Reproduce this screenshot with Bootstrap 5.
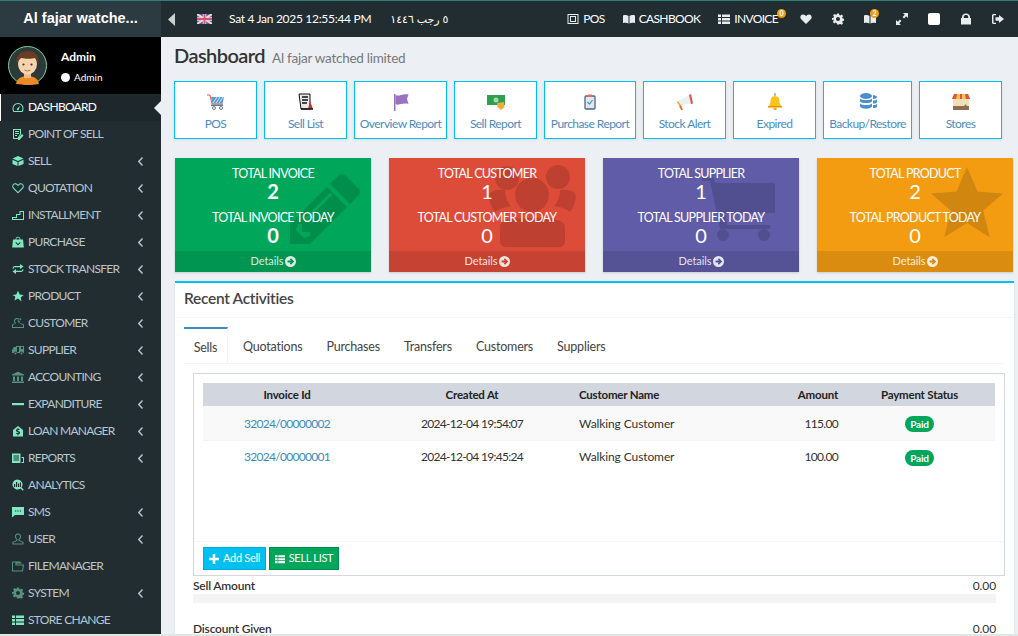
<!DOCTYPE html>
<html lang="en">
<head>
<meta charset="UTF-8">
<title>Dashboard</title>
<link href="https://cdn.jsdelivr.net/npm/bootstrap@5.3.0/dist/css/bootstrap.min.css" rel="stylesheet">
<style>
html, body { height: 636px; overflow: hidden; }
body { font-family: "Lato", "DejaVu Sans", sans-serif; font-size: 13px; background: #ecf0f5; color: #333; border-top: 1px solid #2f7d7d; border-bottom: 2px solid #dfe8e4; }
.shell { height: 633px; }
.side-col { width: 161px; background: #222d32; flex: none; }
.brand-box { height: 36px; background: #2c3b41; color: #fff; font-family: "Liberation Sans", sans-serif; font-weight: 700; font-size: 14.5px; }
.user-box { height: 57px; background: #000; color: #fff; padding: 9px 0 0 8px; }
.user-info { margin-left: 14px; }
.user-name { font-size: 12px; font-weight: 700; line-height: 15px; margin-top: 3px; }
.user-role { font-size: 10px; line-height: 12px; margin-top: 7px; }
.dot-on { width: 9px; height: 9px; border-radius: 50%; background: #fff; }
.side-item { height: 27px; padding: 0 18px 1px 12px; color: #b8c7ce; text-decoration: none; font-size: 12px; letter-spacing: -.7px; position: relative; white-space: nowrap; }
.side-item.on { background: #1e282c; color: #fff; border-left: 1px solid #fff; padding-left: 11px; }
.side-item.on::after { content: ""; position: absolute; right: 0; top: 7px; border: 7px solid transparent; border-right-color: #ecf0f5; border-left: 0; }
.side-ico { width: 12px; height: 12px; margin-right: 4px; flex: none; fill: #7fe8c0; fill-rule: evenodd; }
.side-ico.dim { opacity: .55; }
.chev { width: 5px; height: 9px; margin-left: auto; stroke: #b8c7ce; stroke-width: 1.4; fill: none; }
.top-bar { height: 36px; background: #222d32; color: #fff; font-size: 12px; flex: none; white-space: nowrap; padding-right: 14px; }
.back-arrow { margin: 0 22px 0 7px; }
.top-date { margin-left: 17px; letter-spacing: -.3px; }
.top-hijri { margin-left: 19px; font-size: 11px; }
.top-link { letter-spacing: -.65px; position: relative; margin-left: 18px; }
.top-ico { width: 12px; height: 12px; fill: #e8ecec; flex: none; fill-rule: evenodd; }
.top-solo { margin-left: 20px; position: relative; }
.top-first { margin-left: 22px; }
.top-badge { position: absolute; background: #f39c12; color: #fff; border-radius: 50%; width: 9px; height: 9px; font-size: 7px; line-height: 9px; text-align: center; font-weight: 700; letter-spacing: 0; font-style: normal; }
.badge-inv { right: -8px; top: -1px; }
.badge-book { right: -3px; top: -4px; }
.head-row { padding: 6px 0 0 13px; height: 44px; }
.page-title { font-size: 20px; font-weight: 600; color: #333; letter-spacing: -.55px; line-height: 24px; }
.page-sub { font-size: 13.5px; color: #777; letter-spacing: -.25px; margin-left: -1px; }
.tile-row { margin-left: 13px; gap: 7px; }
.tile { height: 58px; background: #fff; border: 1px solid #00c0ef; color: #4d8cbf; font-size: 12px; letter-spacing: -.55px; flex: none; box-shadow: 0 1px 3px rgba(0,0,0,.08); white-space: nowrap; padding-top: 4px; }
.tile svg { width: 20px; height: 20px; display: block; margin-bottom: 3px; }
.w83 { width: 83px; } .w89 { width: 89px; } .w92 { width: 92px; } .w93 { width: 93px; }
.stat-row { margin: 19px 0 0 14px; gap: 18px; }
.stat { width: 196px; height: 114px; color: #fff; position: relative; overflow: hidden; flex: none; box-shadow: 0 1px 2px rgba(0,0,0,.15); }
.stat-body { height: 93px; padding-top: 8px; text-align: center; position: relative; font-size: 12.5px; letter-spacing: -.72px; line-height: 16px; }
.stat-num { font-size: 20px; line-height: 21px; margin: -1px 0 8px; letter-spacing: 0; }
.stat-foot { height: 21px; background: rgba(0,0,0,.1); font-size: 11px; letter-spacing: -.1px; color: rgba(255,255,255,.85); position: relative; padding-left: 1px; }
.stat-foot svg { width: 11px; height: 11px; margin-left: 2px; fill: #fff; fill-rule: evenodd; opacity: .85; }
.stat-bg { position: absolute; fill: rgba(0,0,0,.14); fill-rule: evenodd; }
.bg-pencil { width: 72px; height: 72px; left: 115px; top: 14px; }
.bg-users { width: 90px; height: 90px; left: 100px; top: 5px; }
.bg-cart { width: 85px; height: 80px; left: 95px; top: 10px; }
.bg-star { width: 76px; height: 74px; left: 112px; top: 8px; }
.c-green { background: #00a65a; } .c-red { background: #dd4b39; } .c-purple { background: #605ca8; } .c-orange { background: #f39c12; }
.panel-box { width: 839px; background: #fff; border-top: 2px solid #00c0ef; margin-left: 14px; margin-top: 9px; flex: 1; overflow: hidden; box-shadow: 0 1px 2px rgba(0,0,0,.12); }
.panel-head { height: 35px; border-bottom: 1px solid #f4f4f4; padding: 0 0 2px 9px; font-size: 15.5px; font-weight: 600; letter-spacing: -.3px; color: #444; }
.tab-row { margin: 9px 9px 0; height: 37px; border-bottom: 1px solid #f4f4f4; }
.tab-lnk { padding: 4px 15px 0 0; margin-right: 9px; color: #444; font-size: 12.5px; letter-spacing: -.2px; }
.tab-lnk.on { width: 44px; margin-right: 15px; padding: 4px 0 0; justify-content: center; border-top: 2px solid #3c8dbc; border-right: 1px solid #f4f4f4; height: 37px; }
.inner-box { margin: 9px 9px 0 18px; width: 812px; height: 203px; border: 1px solid #d2d6de; padding: 9px; position: relative; }
.sell-tbl { width: 792px; table-layout: fixed; border-collapse: collapse; font-size: 12px; letter-spacing: -.1px; }
.sell-tbl th { background: #d2d6de; height: 23px; padding: 0 6px; font-size: 11.5px; font-weight: 700; color: #222; letter-spacing: -.2px; }
.sell-tbl th:nth-child(1) { width: 168px; } .sell-tbl th:nth-child(2) { width: 202px; } .sell-tbl th:nth-child(3) { width: 187px; } .sell-tbl th:nth-child(4) { width: 84px; } .sell-tbl th:nth-child(5) { width: 151px; }
.sell-tbl td { padding: 2px 6px 0; color: #333; }
.sell-tbl td.digits { letter-spacing: -.7px; }
.sell-tbl .r1 td { background: #f9f9f9; height: 34px; border-bottom: 1px solid #f4f4f4; }
.sell-tbl .r2 td { height: 33px; }
.sell-tbl .r2 td:not(:last-child) { padding-top: 0; }
.sell-tbl a { color: #3c8dbc; text-decoration: none; }
.paid { background: #00a65a; color: #fff; border-radius: 8px; font-size: 10px; font-weight: 700; padding: 0 5px; line-height: 16px; display: inline-block; letter-spacing: -.2px; }
.box-foot { position: absolute; left: 0; right: 0; bottom: 0; height: 34px; border-top: 1px solid #f4f4f4; padding: 5px 0 0 9px; }
.act { height: 23px; width: 63px; color: #fff; font-size: 11px; border: 1px solid #00acd6; background: #00c0ef; letter-spacing: -.3px; white-space: nowrap; gap: 4px; }
.act.g { width: 70px; background: #00a65a; border-color: #008d4c; margin-left: 3px; }
.act svg { width: 10px; height: 10px; fill: #fff; flex: none; }
.amt-row { margin: 3px 0 0 18px; width: 803px; font-size: 12px; letter-spacing: -.1px; line-height: 13px; }
.amt-row b { font-weight: 600; color: #333; letter-spacing: -.2px; }
.amt-bar { margin: 2px 0 19px 18px; width: 803px; height: 9px; background: #f4f4f4; }
</style>
</head>
<body>
<svg width="0" height="0" class="d-none">
  <symbol id="dash" viewBox="0 0 12 12"><path d="M6 2a5.500 5.500 0 0 0-5.500 5.500c0 1.500.5 2.500 1 3.500h9c.5-1 1-2 1-3.500A5.500 5.500 0 0 0 6 2zm0 1a4.500 4.500 0 0 1 4.500 4.500c0 1-.3 1.800-.6 2.500H2.100c-.3-.7-.6-1.500-.6-2.500A4.500 4.500 0 0 1 6 3zm2.200 1.800L5.500 7.200a1 1 0 1 0 1.300 1.100z"/></symbol>
  <symbol id="form" viewBox="0 0 12 12"><path d="M1 1h8v5L6 11H1zm1 1v8h3.500L8 6V2zm1 1h4v1H3zm0 2h4v1H3zm0 2h2v1H3zm7-1 1.500 1.500L7.500 12H6v-1.500z"/></symbol>
  <symbol id="box" viewBox="0 0 12 12"><path d="M6 1 11.500 3.500 6 6 .5 3.500zM.5 4.800 5.500 7v4L.5 9zM6.500 7l5-2.200V9l-5 2z"/></symbol>
  <symbol id="heart" viewBox="0 0 12 12"><path d="M6 11 1 6C-.5 4 .8 1.500 3 1.500c1.300 0 2.400.8 3 1.800.6-1 1.700-1.800 3-1.800 2.200 0 3.500 2.500 2 4.500z"/></symbol>
  <symbol id="heart-o" viewBox="0 0 12 12"><path d="M6 11.500.8 6.200C-.7 4 .8 1.200 3.200 1.200 4.400 1.200 5.400 1.800 6 2.800c.6-1 1.600-1.600 2.800-1.600 2.400 0 3.900 2.800 2.400 5zM6 10l4.400-4.500c1-1.500 0-3.300-1.600-3.300-1.200 0-2.200 1-2.800 2.200-.6-1.200-1.600-2.200-2.800-2.200-1.600 0-2.600 1.800-1.600 3.300z"/></symbol>
  <symbol id="steps" viewBox="0 0 12 12"><path d="M0 11V8h4V5h3.500V2H12v9zm1-1h10V3H8.500v3H5v3H1z"/></symbol>
  <symbol id="bag" viewBox="0 0 12 12"><path d="M1 3.500h2.500C3.500 2 4.500.8 6 .8s2.500 1.200 2.500 2.700H11l.8 8H.2zm3.300 0h3.400C7.700 2.500 7 1.600 6 1.600s-1.700.9-1.700 1.900zM4 6l2 2 2-2 .7.7L6 9.500 3.300 6.700z"/></symbol>
  <symbol id="swap" viewBox="0 0 12 12"><path d="M8 1l3.500 2.500L8 6V4.300H3c-1 0-1.500.7-1.500 1.500H.5C.5 4.300 1.500 3 3 3h5zM4 11 .5 8.500 4 6v1.700h5c1 0 1.500-.7 1.500-1.500h1c0 1.500-1 2.800-2.500 2.800H4z"/></symbol>
  <symbol id="star" viewBox="0 0 12 12"><path d="m6 .8 1.700 3.600 3.900.5-2.900 2.700.8 3.900L6 8.600l-3.500 1.900.8-3.900L.4 4.900l3.900-.5z"/></symbol>
  <symbol id="cust" viewBox="0 0 12 12"><path d="M5 1a3 3 0 0 1 3 3 3 3 0 0 1-1 2.300l-.6-.7A2 2 0 0 0 7 4a2 2 0 0 0-4 0c0 .7.300 1.300.8 1.700l.2.600L1 8v2h10V8L8 6.800l.4-.8L12 7.500V11H0V7.500l2.900-1.300A3 3 0 0 1 2 4a3 3 0 0 1 3-3zM8.500 1l1 1-3 3-1-1z"/></symbol>
  <symbol id="truck" viewBox="0 0 12 12"><path d="M4 2h8v7h-1a1.500 1.500 0 0 0-3 0H5a1.500 1.500 0 0 0-3 0H0V6l2-3h2zm1 1v5h2V3zm4 0v2h2V3zM3.500 8.500a1 1 0 1 1 0 2 1 1 0 0 1 0-2zm6 0a1 1 0 1 1 0 2 1 1 0 0 1 0-2z"/></symbol>
  <symbol id="bank" viewBox="0 0 12 12"><path d="M6 .8 12 3.600v1H0v-1zM1 5.500h2V10H1zm4 0h2V10H5zm4 0h2V10H9zM0 10.500h12V12H0z"/></symbol>
  <symbol id="minus" viewBox="0 0 12 12"><path d="M0 5h12v2.200H0z"/></symbol>
  <symbol id="loan" viewBox="0 0 12 12"><path d="M6 1l5 4v6.500H1V5zM5.500 3v1C4.500 4.200 4 4.800 4 5.500c0 1 .9 1.400 1.800 1.700.6.200.8.300.8.600s-.3.500-.8.500c-.4 0-.9-.2-1.300-.5l-.5 1c.4.300 1 .5 1.500.5v1h1v-1c1-.2 1.500-.9 1.500-1.600 0-1-.7-1.400-1.800-1.800-.6-.2-.8-.3-.8-.6 0-.2.200-.4.700-.4.400 0 .8.100 1.100.3l.4-1c-.3-.2-.7-.3-1.100-.3V3z"/></symbol>
  <symbol id="report" viewBox="0 0 12 12"><path d="M0 1.500h8.500V11H0zm1.500 2v1h5.500v-1zm0 2v1h5.500v-1zm0 2v1h5.500v-1zM9.500 5H12v6H9.500v-1h1.500V6H9.500z"/></symbol>
  <symbol id="chart" viewBox="0 0 12 12"><path d="M5.500 .5a5 5 0 0 1 4 8l2.300 2.300-1 1-2.300-2.300a5 5 0 1 1-3-9zM2 5h1.200v3H2zm2-2h1.200v5H4zm2 1.500h1.200V8H6zm2-1h1v4.500H8z"/></symbol>
  <symbol id="sms" viewBox="0 0 12 12"><path d="M0 1h12v8H3l-3 2.500zm3 3.400v1.200h1.200V4.400zm2.400 0v1.200h1.200V4.400zm2.400 0v1.200H9V4.400z"/></symbol>
  <symbol id="user-o" viewBox="0 0 12 12"><path d="M6 .5a3 3 0 0 1 3 3c0 1.300-.6 2.400-1.500 3v.7L11.500 9v2.500H.5V9l4-1.800v-.7A3.500 3.500 0 0 1 3 3.500a3 3 0 0 1 3-3zm0 1a2 2 0 0 0-2 2c0 1.200.7 2.200 1.500 2.500v1.800l-4 1.800v1h9v-1l-4-1.800V6C7.300 5.700 8 4.700 8 3.500a2 2 0 0 0-2-2z"/></symbol>
  <symbol id="folder" viewBox="0 0 12 12"><path d="M1 1.500h7l2 2H4.500v1H12l-1 7H0V2zm0 1v8h9.200l.6-5H3.500V2.500z"/></symbol>
  <symbol id="gear" viewBox="0 0 12 12"><path d="M5 .5h2l.3 1.600 1 .4L9.700 1.600l1.400 1.400-.9 1.400.4 1 1.600.3v2l-1.600.3-.4 1 .9 1.400-1.400 1.400-1.400-.9-1 .4L7 11.500H5l-.3-1.600-1-.4-1.400.9-1.400-1.400.9-1.400-.4-1L0 7V5l1.600-.3.4-1-.9-1.400L2.500.9l1.400.9 1-.4zM6 4a2 2 0 1 0 0 4 2 2 0 0 0 0-4z"/></symbol>
  <symbol id="lines" viewBox="0 0 12 12"><path d="M0 1.500h3v2.500H0zm4 0h8v2.500H4zM0 5h3v2.500H0zm4 0h8v2.500H4zM0 8.500h3V11H0zm4 0h8V11H4z"/></symbol>
  <symbol id="book" viewBox="0 0 12 12"><path d="M0 2.500c2-.7 4-.7 5.500.5v7.500C4 9.500 2 9.500 0 10zm12 0v7.500c-2-.5-4-.5-5.500.5V3C8 1.800 10 1.800 12 2.500z"/></symbol>
  <symbol id="screen" viewBox="0 0 12 12"><path d="M.5 1h11v10H.5zm1 1v8h9V2zM3 3h6v6H3zm1 1v4h4V4z"/></symbol>
  <symbol id="expand" viewBox="0 0 12 12"><path d="M7 0h5v5l-1.800-1.800-2.200 2.200L6.600 4l2.200-2.200zM0 12V7l1.800 1.800L4 6.600 5.400 8 3.200 10.200 5 12z"/></symbol>
  <symbol id="lock" viewBox="0 0 12 12"><path d="M2 5V3.700C2 1.800 3.800.5 6 .5s4 1.300 4 3.200V5h1v6.500H1V5zm1.800 0h4.400V3.700C8.200 2.700 7.200 2 6 2s-2.200.7-2.200 1.700z"/></symbol>
  <symbol id="signout" viewBox="0 0 12 12"><path d="M0 2.500C0 1.700.7 1 1.500 1H4v1.300H1.500v7.400H4V11H1.500C.7 11 0 10.300 0 9.500zM7 2l5 4-5 4V7.800H3.500V4.200H7z"/></symbol>
  <symbol id="circ" viewBox="0 0 12 12"><path d="M6 0a6 6 0 1 1 0 12A6 6 0 0 1 6 0zm.5 2.500L5.200 3.800 6.500 5H2.800v2h3.700L5.200 8.200l1.300 1.300L10 6z"/></symbol>
  <symbol id="plus" viewBox="0 0 12 12"><path d="M4.500 0h3v4.500H12v3H7.500V12h-3V7.500H0v-3h4.500z"/></symbol>
</svg>

<div class="shell d-flex">
  <div class="side-col d-flex flex-column">
    <div class="brand-box d-flex align-items-center justify-content-center">Al fajar watche...</div>
    <div class="user-box d-flex">
      <svg width="39" height="39" viewBox="0 0 39 39">
        <circle cx="19.500" cy="19.500" r="19" fill="#2d3a3a" stroke="#7fcfa8"/>
        <path d="M8 38c1-6 6-8 11.500-8S30 32 31 38c-3 1-15 1-23 0z" fill="#f08a24"/>
        <rect x="16" y="25" width="7" height="7" fill="#e9b990"/>
        <ellipse cx="19.500" cy="18" rx="9.500" ry="10.500" fill="#f6d3ad"/>
        <path d="M9 18C7 9 13 5 19.500 5S32 9 30 18c-1-3-2-5-3-6-3 1-10 1-14 0-1 1-3 3-4 6z" fill="#6a3d22"/>
        <circle cx="15.500" cy="18.500" r="1.100" fill="#333"/><circle cx="23.500" cy="18.500" r="1.100" fill="#333"/>
        <path d="M16.500 24c2 1.200 4 1.200 6 0" stroke="#b5714a" fill="none"/>
      </svg>
      <div class="user-info">
        <div class="user-name">Admin</div>
        <div class="user-role d-flex align-items-center gap-1"><span class="dot-on"></span>Admin</div>
      </div>
    </div>
    <a href="#" class="side-item on d-flex align-items-center"><svg class="side-ico"><use href="#dash"/></svg>DASHBOARD</a>
    <a href="#" class="side-item d-flex align-items-center"><svg class="side-ico"><use href="#form"/></svg>POINT OF SELL</a>
    <a href="#" class="side-item d-flex align-items-center"><svg class="side-ico"><use href="#box"/></svg>SELL<svg class="chev" viewBox="0 0 5 9"><path d="M4.500 .5.800 4.500l3.700 4"/></svg></a>
    <a href="#" class="side-item d-flex align-items-center"><svg class="side-ico"><use href="#heart-o"/></svg>QUOTATION<svg class="chev" viewBox="0 0 5 9"><path d="M4.500 .5.800 4.500l3.700 4"/></svg></a>
    <a href="#" class="side-item d-flex align-items-center"><svg class="side-ico"><use href="#steps"/></svg>INSTALLMENT<svg class="chev" viewBox="0 0 5 9"><path d="M4.500 .5.800 4.500l3.700 4"/></svg></a>
    <a href="#" class="side-item d-flex align-items-center"><svg class="side-ico"><use href="#bag"/></svg>PURCHASE<svg class="chev" viewBox="0 0 5 9"><path d="M4.500 .5.800 4.500l3.700 4"/></svg></a>
    <a href="#" class="side-item d-flex align-items-center"><svg class="side-ico"><use href="#swap"/></svg>STOCK TRANSFER<svg class="chev" viewBox="0 0 5 9"><path d="M4.500 .5.800 4.500l3.700 4"/></svg></a>
    <a href="#" class="side-item d-flex align-items-center"><svg class="side-ico"><use href="#star"/></svg>PRODUCT<svg class="chev" viewBox="0 0 5 9"><path d="M4.500 .5.800 4.500l3.700 4"/></svg></a>
    <a href="#" class="side-item d-flex align-items-center"><svg class="side-ico dim"><use href="#cust"/></svg>CUSTOMER<svg class="chev" viewBox="0 0 5 9"><path d="M4.500 .5.800 4.500l3.700 4"/></svg></a>
    <a href="#" class="side-item d-flex align-items-center"><svg class="side-ico dim"><use href="#truck"/></svg>SUPPLIER<svg class="chev" viewBox="0 0 5 9"><path d="M4.500 .5.800 4.500l3.700 4"/></svg></a>
    <a href="#" class="side-item d-flex align-items-center"><svg class="side-ico dim"><use href="#bank"/></svg>ACCOUNTING<svg class="chev" viewBox="0 0 5 9"><path d="M4.500 .5.800 4.500l3.700 4"/></svg></a>
    <a href="#" class="side-item d-flex align-items-center"><svg class="side-ico"><use href="#minus"/></svg>EXPANDITURE<svg class="chev" viewBox="0 0 5 9"><path d="M4.500 .5.800 4.500l3.700 4"/></svg></a>
    <a href="#" class="side-item d-flex align-items-center"><svg class="side-ico"><use href="#loan"/></svg>LOAN MANAGER<svg class="chev" viewBox="0 0 5 9"><path d="M4.500 .5.800 4.500l3.700 4"/></svg></a>
    <a href="#" class="side-item d-flex align-items-center"><svg class="side-ico"><use href="#report"/></svg>REPORTS<svg class="chev" viewBox="0 0 5 9"><path d="M4.500 .5.800 4.500l3.700 4"/></svg></a>
    <a href="#" class="side-item d-flex align-items-center"><svg class="side-ico"><use href="#chart"/></svg>ANALYTICS</a>
    <a href="#" class="side-item d-flex align-items-center"><svg class="side-ico"><use href="#sms"/></svg>SMS<svg class="chev" viewBox="0 0 5 9"><path d="M4.500 .5.800 4.500l3.700 4"/></svg></a>
    <a href="#" class="side-item d-flex align-items-center"><svg class="side-ico dim"><use href="#user-o"/></svg>USER<svg class="chev" viewBox="0 0 5 9"><path d="M4.500 .5.800 4.500l3.700 4"/></svg></a>
    <a href="#" class="side-item d-flex align-items-center"><svg class="side-ico dim"><use href="#folder"/></svg>FILEMANAGER</a>
    <a href="#" class="side-item d-flex align-items-center"><svg class="side-ico dim"><use href="#gear"/></svg>SYSTEM<svg class="chev" viewBox="0 0 5 9"><path d="M4.500 .5.800 4.500l3.700 4"/></svg></a>
    <a href="#" class="side-item d-flex align-items-center"><svg class="side-ico"><use href="#lines"/></svg>STORE CHANGE</a>
  </div>

  <div class="flex-grow-1 d-flex flex-column overflow-hidden">
    <div class="top-bar d-flex align-items-center">
      <svg class="back-arrow" width="7" height="13" viewBox="0 0 7 13"><path d="M7 0v13L0 6.500z" fill="#c9d0d0"/></svg>
      <svg width="15" height="10" viewBox="0 0 15 10"><rect width="15" height="10" fill="#5a5fa8"/><path d="M0 0l15 10M15 0 0 10" stroke="#f4d6dc" stroke-width="2"/><path d="M7.500 0v10M0 5h15" stroke="#f4d6dc" stroke-width="3.500"/><path d="M7.500 0v10M0 5h15" stroke="#d8506a" stroke-width="1.800"/></svg>
      <span class="top-date">Sat 4 Jan 2025 12:55:44 PM</span>
      <span class="top-hijri" dir="rtl">٥ رجب ١٤٤٦</span>
      <div class="ms-auto d-flex align-items-center">
        <span class="top-link d-flex align-items-center gap-1"><svg class="top-ico"><use href="#screen"/></svg>POS</span>
        <span class="top-link d-flex align-items-center gap-1"><svg class="top-ico"><use href="#book"/></svg>CASHBOOK</span>
        <span class="top-link d-flex align-items-center gap-1"><svg class="top-ico"><use href="#lines"/></svg>INVOICE<i class="top-badge badge-inv">0</i></span>
        <svg class="top-ico top-first"><use href="#heart"/></svg>
        <svg class="top-ico top-solo"><use href="#gear"/></svg>
        <span class="top-solo d-flex"><svg class="top-ico"><use href="#book"/></svg><i class="top-badge badge-book">2</i></span>
        <svg class="top-ico top-solo"><use href="#expand"/></svg>
        <svg class="top-ico top-solo" viewBox="0 0 12 12"><rect width="12" height="12" rx="2" fill="#fff"/></svg>
        <svg class="top-ico top-solo"><use href="#lock"/></svg>
        <svg class="top-ico top-solo"><use href="#signout"/></svg>
      </div>
    </div>

    <div class="head-row d-flex align-items-baseline gap-2">
      <span class="page-title">Dashboard</span><span class="page-sub">Al fajar watched limited</span>
    </div>

    <div class="tile-row d-flex">
      <div class="tile w83 d-flex flex-column align-items-center justify-content-center">
        <svg viewBox="0 0 20 20"><path d="M1 3h3l2 9h11" stroke="#e05a4a" stroke-width="1" fill="none"/><path d="M5 5h13l-1.500 6.500H6.500z" fill="#5b9bd5"/><path d="M7 11l4-6M10 11l4-6M13 11l4-6" stroke="#cfe3f5"/><rect x="5" y="12.500" width="12" height="1.500" fill="#6b7b88"/><circle cx="8" cy="16" r="1.500" fill="none" stroke="#6b7b88"/><circle cx="15" cy="16" r="1.500" fill="none" stroke="#6b7b88"/></svg>POS</div>
      <div class="tile w83 d-flex flex-column align-items-center justify-content-center">
        <svg viewBox="0 0 20 20"><path d="M3 2h11v15H5z" fill="#e8e8e8" stroke="#111"/><path d="M6 5h6M6 8h6M6 11h5" stroke="#111" stroke-width="1.300"/><path d="M14 9l3 8h-5z" fill="#c0392b"/><path d="M5 17h12" stroke="#111" stroke-width="1.500"/></svg>Sell List</div>
      <div class="tile w93 d-flex flex-column align-items-center justify-content-center">
        <svg viewBox="0 0 20 20"><rect x="3" y="2" width="1.500" height="17" fill="#9b72c0"/><path d="M4.500 3C8 5 11 1 17.500 2.500L16 7l1.500 5C11 10.500 8 14 4.500 12z" fill="#9b72c0"/></svg>Overview Report</div>
      <div class="tile w83 d-flex flex-column align-items-center justify-content-center">
        <svg viewBox="0 0 20 20"><rect x="1" y="3" width="18" height="10" fill="#2e9e4f"/><circle cx="10" cy="8" r="2.500" fill="#9fdcae"/><path d="M11 11l7-1 .5 5-3.500 3-3.500-3z" fill="#f2a93b"/></svg>Sell Report</div>
      <div class="tile w92 d-flex flex-column align-items-center justify-content-center">
        <svg viewBox="0 0 20 20"><rect x="5" y="4" width="10" height="13" rx="1" fill="#dfe6ee" stroke="#56657a" stroke-width="1.300"/><rect x="8" y="2.500" width="4" height="2.500" fill="#e0705a"/><path d="M7.500 10l2 2 3-4" stroke="#4a90d0" fill="none" stroke-width="1.200"/></svg>Purchase Report</div>
      <div class="tile w83 d-flex flex-column align-items-center justify-content-center">
        <svg viewBox="0 0 20 20"><path d="M3 9l11-6 2 9-10 1z" fill="#eceff1"/><path d="M14 3l2 9 2-.5L16 2z" fill="#d9534f"/><path d="M3 9l3 4-1.500 1-2.500-3.500z" fill="#f2a93b"/><path d="M6 13l2 5H6l-2-4z" fill="#e2742e"/></svg>Stock Alert</div>
      <div class="tile w83 d-flex flex-column align-items-center justify-content-center">
        <svg viewBox="0 0 20 20"><rect x="9.500" y="1" width="1" height="3" fill="#9a7a3a"/><path d="M10 4c3.500 0 4.500 3 4.500 5.500 0 2.500 1 3.500 2 4.500H3.500c1-1 2-2 2-4.500S6.500 4 10 4z" fill="#fcc419"/><rect x="3" y="14" width="14" height="1.500" fill="#f08c00"/><rect x="8.500" y="15.500" width="3" height="2.500" fill="#f4b400"/></svg>Expired</div>
      <div class="tile w89 d-flex flex-column align-items-center justify-content-center">
        <svg viewBox="0 0 20 20"><ellipse cx="8" cy="4" rx="6" ry="3" fill="#4a8fcb"/><path d="M2 6.500c2 2 10 2 12 0v3c-2 2-10 2-12 0zM2 11.500c2 2 10 2 12 0v3c-2 3-10 3-12 0z" fill="#4a8fcb"/><path d="M15 3c2 0 4 1 4 2s-2 2-4 2zM15 8.500c2 0 4-.5 4-1.500v3c0 1-2 1.500-4 1.500zM15 13c2 0 4-.5 4-1.500v3c0 1-2 1.500-4 1.500z" fill="#4a8fcb"/></svg>Backup/Restore</div>
      <div class="tile w83 d-flex flex-column align-items-center justify-content-center">
        <svg viewBox="0 0 20 20"><rect x="2" y="7" width="16" height="11" fill="#f3dfb5"/><rect x="2" y="14" width="16" height="4" fill="#8d6e53"/><path d="M3 2h14l2 5H1z" fill="#f5c242"/><path d="M3 2h3l-1 5H1zM9 2h2v5H9zM14 2h3l2 5h-4z" fill="#d9534f"/><path d="M13 14l1.500-2 1.500 2z" fill="#3aa76d"/></svg>Stores</div>
    </div>

    <div class="stat-row d-flex">
      <div class="stat c-green">
        <svg class="stat-bg bg-pencil" viewBox="0 0 72 72"><path d="M48 4Q52 0 56 4L68 16Q72 20 68 24L60 32 40 12zM37 15 57 35 20 72H0V52zM14 47 40 21 42 23 16 49zM8 52h4v8h8v4l-6 2-8-8z"/></svg>
        <div class="stat-body"><div>TOTAL INVOICE</div><div class="stat-num fw-bold">2</div><div>TOTAL INVOICE TODAY</div><div class="stat-num fw-bold">0</div></div>
        <div class="stat-foot d-flex align-items-center justify-content-center">Details<svg><use href="#circ"/></svg></div>
      </div>
      <div class="stat c-red">
        <svg class="stat-bg bg-users" viewBox="0 0 90 90"><circle cx="43" cy="32" r="17"/><circle cx="18" cy="15" r="12"/><circle cx="69" cy="14" r="12"/><path d="M11 64c0-7 10-9 32-9s33 2 33 9v14c0 4-3 6-6 6H17c-3 0-6-2-6-6zM1 30c3-3 9-4 15-3 0 7 3 13 6 16-7 1-13 3-16 6-4-5-7-13-5-19zM86 30c-3-3-9-4-15-3 0 7-3 13-6 16 7 1 13 3 16 6 4-5 7-13 5-19z"/></svg>
        <div class="stat-body"><div>TOTAL CUSTOMER</div><div class="stat-num">1</div><div>TOTAL CUSTOMER TODAY</div><div class="stat-num">0</div></div>
        <div class="stat-foot d-flex align-items-center justify-content-center">Details<svg><use href="#circ"/></svg></div>
      </div>
      <div class="stat c-purple">
        <svg class="stat-bg bg-cart" viewBox="0 0 85 80"><path d="M4 9h11l3 6h59v30H27l2 12h43v4H22L12 13H4z"/><circle cx="25" cy="67" r="6"/><circle cx="66" cy="67" r="6"/></svg>
        <div class="stat-body"><div>TOTAL SUPPLIER</div><div class="stat-num">1</div><div>TOTAL SUPPLIER TODAY</div><div class="stat-num">0</div></div>
        <div class="stat-foot d-flex align-items-center justify-content-center">Details<svg><use href="#circ"/></svg></div>
      </div>
      <div class="stat c-orange">
        <svg class="stat-bg bg-star" viewBox="0 0 80 76"><path d="M40 0l11 26 27 2-21 18 7 28-24-15-24 15 7-28L2 28l27-2z"/></svg>
        <div class="stat-body"><div>TOTAL PRODUCT</div><div class="stat-num">2</div><div>TOTAL PRODUCT TODAY</div><div class="stat-num">0</div></div>
        <div class="stat-foot d-flex align-items-center justify-content-center">Details<svg><use href="#circ"/></svg></div>
      </div>
    </div>

    <div class="panel-box">
      <div class="panel-head d-flex align-items-center">Recent Activities</div>
      <div class="tab-row d-flex">
        <span class="tab-lnk on d-flex align-items-center">Sells</span>
        <span class="tab-lnk d-flex align-items-center">Quotations</span>
        <span class="tab-lnk d-flex align-items-center">Purchases</span>
        <span class="tab-lnk d-flex align-items-center">Transfers</span>
        <span class="tab-lnk d-flex align-items-center">Customers</span>
        <span class="tab-lnk d-flex align-items-center">Suppliers</span>
      </div>
      <div class="inner-box">
        <table class="sell-tbl">
          <tr><th class="text-center">Invoice Id</th><th class="text-center">Created At</th><th>Customer Name</th><th class="text-end">Amount</th><th class="text-center">Payment Status</th></tr>
          <tr class="r1"><td class="text-center digits"><a href="#">32024/00000002</a></td><td class="text-center digits">2024-12-04 19:54:07</td><td>Walking Customer</td><td class="text-end digits">115.00</td><td class="text-center"><span class="paid">Paid</span></td></tr>
          <tr class="r2"><td class="text-center digits"><a href="#">32024/00000001</a></td><td class="text-center digits">2024-12-04 19:45:24</td><td>Walking Customer</td><td class="text-end digits">100.00</td><td class="text-center"><span class="paid">Paid</span></td></tr>
        </table>
        <div class="box-foot d-flex align-items-start">
          <span class="act d-flex align-items-center justify-content-center"><svg><use href="#plus"/></svg>Add Sell</span>
          <span class="act g d-flex align-items-center justify-content-center"><svg><use href="#lines"/></svg>SELL LIST</span>
        </div>
      </div>
      <div class="amt-row d-flex justify-content-between"><b>Sell Amount</b><span>0.00</span></div>
      <div class="amt-bar"></div>
      <div class="amt-row d-flex justify-content-between"><b>Discount Given</b><span>0.00</span></div>
    </div>
  </div>
</div>
<script src="https://cdn.jsdelivr.net/npm/bootstrap@5.3.0/dist/js/bootstrap.bundle.min.js"></script>
</body>
</html>
